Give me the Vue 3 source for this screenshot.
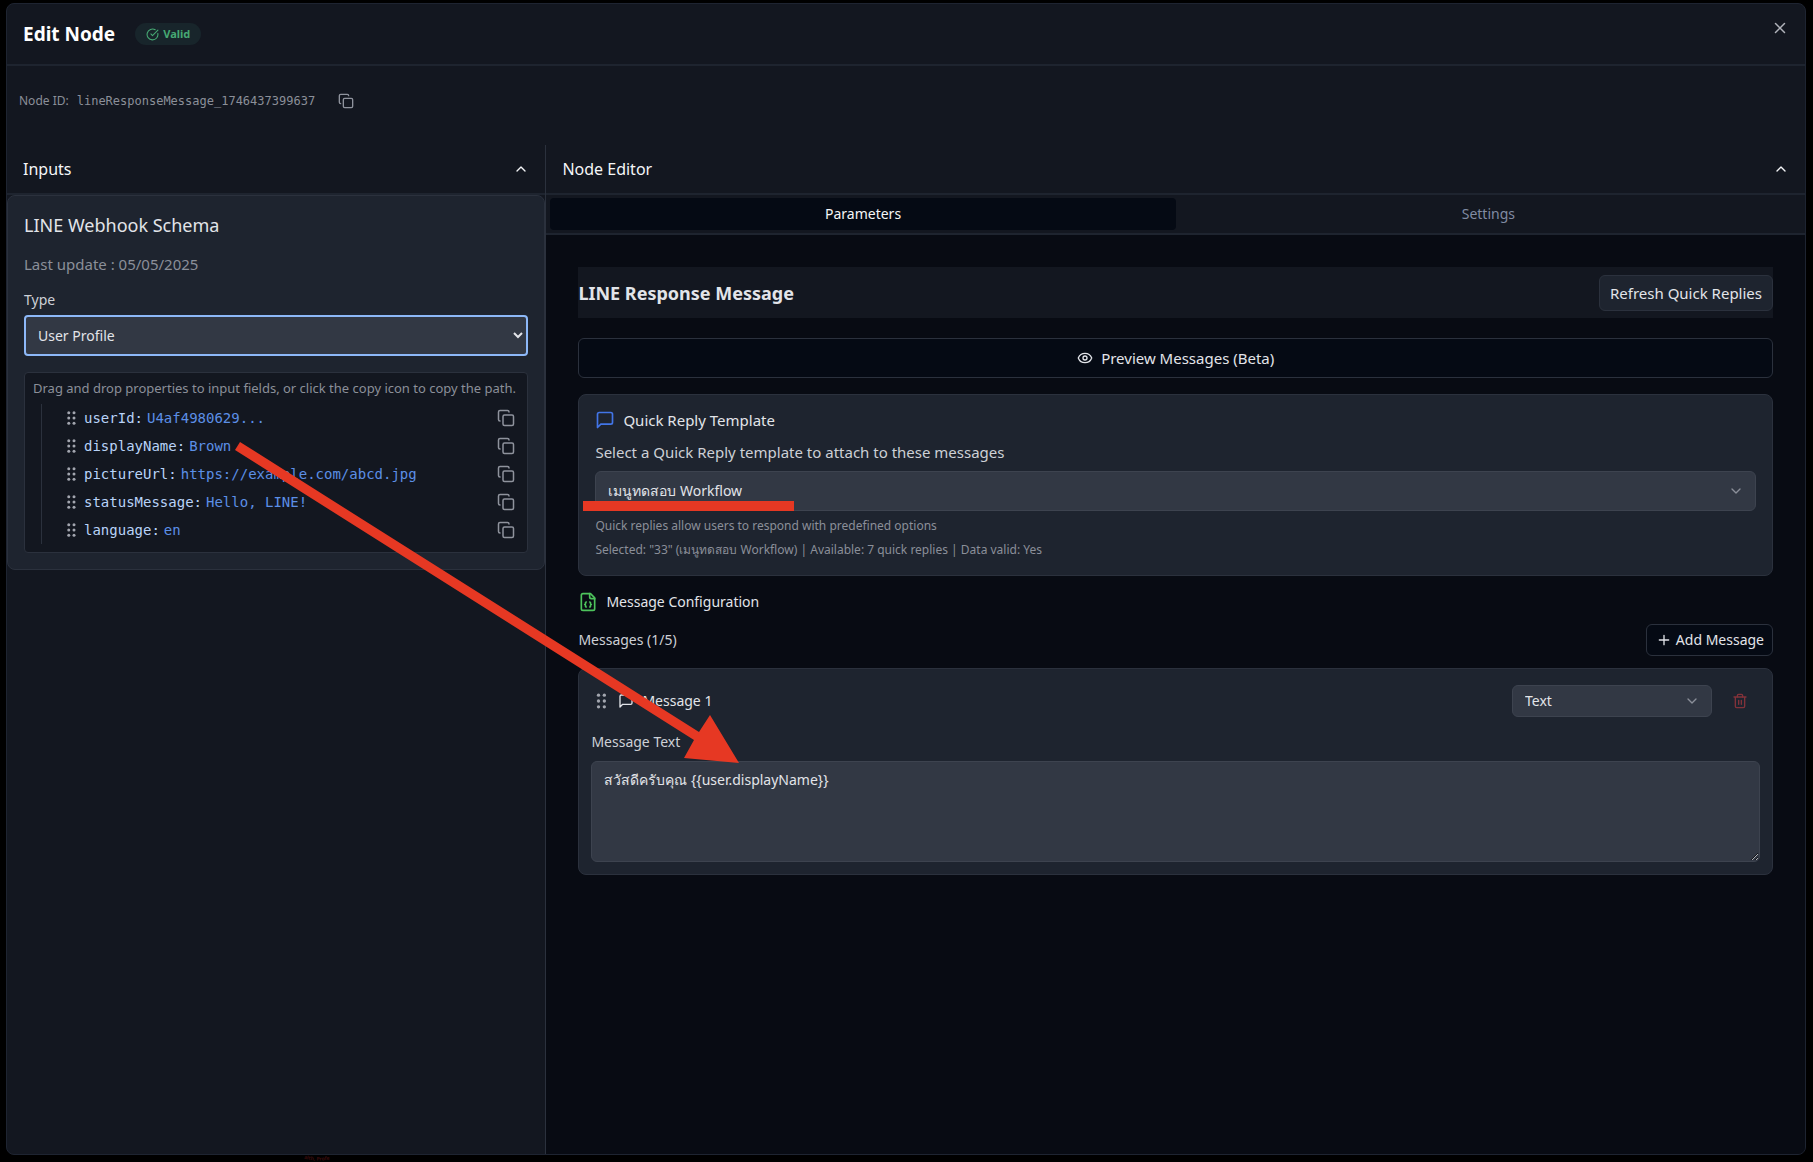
<script setup>
import { ref } from "vue";

const schemaType = ref("User Profile");
const quickReply = ref("33");
const messageType = ref("Text");
const messageText = ref("สวัสดีครับคุณ {{user.displayName}}");
const activeTab = ref("Parameters");
const inputsOpen = ref(true);
const editorOpen = ref(true);

const nodeId = "lineResponseMessage_1746437399637";
const tabs = ["Parameters", "Settings"];

const properties = [
  { key: "userId", value: "U4af4980629..." },
  { key: "displayName", value: "Brown" },
  { key: "pictureUrl", value: "https://example.com/abcd.jpg" },
  { key: "statusMessage", value: "Hello, LINE!" },
  { key: "language", value: "en" },
];

const gripDots = [
  [9, 5],
  [9, 12],
  [9, 19],
  [16, 5],
  [16, 12],
  [16, 19],
];

const copyPath = (key) => {
  navigator.clipboard?.writeText(key);
};
</script>

<template>
  <div class="backdrop">
    <svg class="behind" viewBox="0 0 40 8" aria-hidden="true">
      <path id="arc" d="M2 4 Q20 9 38 4" fill="none" />
      <text><textPath href="#arc" startOffset="3">alth, Profe</textPath></text>
    </svg>

    <div class="dialog" role="dialog" aria-labelledby="dialog-title">
      <header class="dialog-header">
        <h1 id="dialog-title">Edit Node</h1>
        <span class="badge">
          <svg class="icon" viewBox="0 0 24 24">
            <path d="M21.8 10A10 10 0 1 1 17 3.335" />
            <path d="m9 11 3 3L22 4" />
          </svg>
          Valid
        </span>
        <button class="icon-button close" aria-label="Close">
          <svg class="icon i18" viewBox="0 0 24 24">
            <path d="M18 6 6 18M6 6l12 12" />
          </svg>
        </button>
      </header>

      <div class="node-id">
        <span>Node ID:</span>
        <code>{{ nodeId }}</code>
        <button class="icon-button" aria-label="Copy node ID" @click="copyPath(nodeId)">
          <svg class="icon i16" viewBox="0 0 24 24">
            <rect x="8" y="8" width="14" height="14" rx="2" />
            <path d="M4 16c-1.1 0-2-.9-2-2V4c0-1.1.9-2 2-2h10c1.1 0 2 .9 2 2" />
          </svg>
        </button>
      </div>

      <div class="columns">
        <section class="inputs">
          <button class="section-header" @click="inputsOpen = !inputsOpen">
            Inputs
            <svg class="icon i16" viewBox="0 0 24 24"><path d="m18 15-6-6-6 6" /></svg>
          </button>

          <div v-show="inputsOpen" class="card schema">
            <h2>LINE Webhook Schema</h2>
            <p class="updated">Last update : 05/05/2025</p>
            <label for="schema-type">Type</label>
            <select id="schema-type" v-model="schemaType" class="native-select">
              <option>User Profile</option>
              <option>Message Event</option>
            </select>

            <div class="tree">
              <p class="tree-hint">
                Drag and drop properties to input fields, or click the copy icon to copy the path.
              </p>
              <ul>
                <li v-for="item in properties" :key="item.key" draggable="true">
                  <svg class="grip" viewBox="0 0 24 24">
                    <circle v-for="(dot, i) in gripDots" :key="i" :cx="dot[0]" :cy="dot[1]" r="2" />
                  </svg>
                  <span class="key">{{ item.key }}:</span>
                  <span class="value">{{ item.value }}</span>
                  <button
                    class="icon-button"
                    :aria-label="'Copy ' + item.key"
                    @click="copyPath(item.key)"
                  >
                    <svg class="icon i18" viewBox="0 0 24 24">
                      <rect x="8" y="8" width="14" height="14" rx="2" />
                      <path d="M4 16c-1.1 0-2-.9-2-2V4c0-1.1.9-2 2-2h10c1.1 0 2 .9 2 2" />
                    </svg>
                  </button>
                </li>
              </ul>
            </div>
          </div>
        </section>

        <section class="editor">
          <button class="section-header" @click="editorOpen = !editorOpen">
            Node Editor
            <svg class="icon i16" viewBox="0 0 24 24"><path d="m18 15-6-6-6 6" /></svg>
          </button>

          <div class="tabs" role="tablist">
            <button
              v-for="tab in tabs"
              :key="tab"
              role="tab"
              :aria-selected="activeTab === tab"
              :class="{ active: activeTab === tab }"
              @click="activeTab = tab"
            >
              {{ tab }}
            </button>
          </div>

          <div v-show="editorOpen" class="editor-body">
            <div class="title-bar">
              <h2>LINE Response Message</h2>
              <button class="refresh">Refresh Quick Replies</button>
            </div>

            <button class="preview">
              <svg class="icon i16" viewBox="0 0 24 24">
                <path
                  d="M2.062 12.348a1 1 0 0 1 0-.696 10.75 10.75 0 0 1 19.876 0 1 1 0 0 1 0 .696 10.75 10.75 0 0 1-19.876 0"
                />
                <circle cx="12" cy="12" r="3" />
              </svg>
              Preview Messages (Beta)
            </button>

            <div class="card quick-reply">
              <h3>
                <svg class="icon i20 blue" viewBox="0 0 24 24">
                  <path d="M21 15a2 2 0 0 1-2 2H7l-4 4V5a2 2 0 0 1 2-2h14a2 2 0 0 1 2 2z" />
                </svg>
                Quick Reply Template
              </h3>
              <label for="quick-reply">Select a Quick Reply template to attach to these messages</label>
              <div class="select-wrap marked">
                <select id="quick-reply" v-model="quickReply">
                  <option value="33">เมนูทดสอบ Workflow</option>
                </select>
                <svg class="icon i16" viewBox="0 0 24 24"><path d="m6 9 6 6 6-6" /></svg>
              </div>
              <p class="help">Quick replies allow users to respond with predefined options</p>
              <p class="help">
                Selected: "33" (เมนูทดสอบ Workflow) | Available: 7 quick replies | Data valid: Yes
              </p>
            </div>

            <h3>
              <svg class="icon i20 green" viewBox="0 0 24 24">
                <path d="M15 2H6a2 2 0 0 0-2 2v16a2 2 0 0 0 2 2h12a2 2 0 0 0 2-2V7Z" />
                <path d="M14 2v4a2 2 0 0 0 2 2h4" />
                <path d="M10 12a1 1 0 0 0-1 1v1a1 1 0 0 1-1 1 1 1 0 0 1 1 1v1a1 1 0 0 0 1 1" />
                <path d="M14 18a1 1 0 0 0 1-1v-1a1 1 0 0 1 1-1 1 1 0 0 1-1-1v-1a1 1 0 0 0-1-1" />
              </svg>
              Message Configuration
            </h3>

            <div class="messages-bar">
              <span>Messages (1/5)</span>
              <button class="add">
                <svg class="icon i16" viewBox="0 0 24 24"><path d="M5 12h14M12 5v14" /></svg>
                Add Message
              </button>
            </div>

            <div class="card message">
              <div class="message-head">
                <svg class="grip large" viewBox="0 0 24 24">
                  <circle v-for="(dot, i) in gripDots" :key="i" :cx="dot[0]" :cy="dot[1]" r="2" />
                </svg>
                <svg class="icon i16" viewBox="0 0 24 24">
                  <path d="M21 15a2 2 0 0 1-2 2H7l-4 4V5a2 2 0 0 1 2-2h14a2 2 0 0 1 2 2z" />
                </svg>
                <span class="message-name">Message 1</span>
                <div class="select-wrap small">
                  <select v-model="messageType" aria-label="Message type">
                    <option>Text</option>
                    <option>Image</option>
                  </select>
                  <svg class="icon i16" viewBox="0 0 24 24"><path d="m6 9 6 6 6-6" /></svg>
                </div>
                <button class="icon-button trash" aria-label="Delete message">
                  <svg class="icon i16" viewBox="0 0 24 24">
                    <path d="M3 6h18M19 6v14c0 1-1 2-2 2H7c-1 0-2-1-2-2V6" />
                    <path d="M8 6V4c0-1 1-2 2-2h4c1 0 2 1 2 2v2M10 11v6M14 11v6" />
                  </svg>
                </button>
              </div>
              <label for="message-text">Message Text</label>
              <textarea id="message-text" v-model="messageText"></textarea>
            </div>
          </div>
        </section>
      </div>
    </div>

    <!-- arrow linking displayName to the message text -->
    <svg class="arrow" viewBox="0 0 504 321" aria-hidden="true">
      <polygon points="5,0 464,290 475,273 504,321 449,316 459,298 0,8" />
    </svg>
  </div>
</template>

<style>
body {
  background-color: #000;
}
</style>

<style scoped>
* {
  box-sizing: border-box;
}
h1,
h2,
h3,
p,
ul {
  margin: 0;
  padding: 0;
}
button,
select,
textarea {
  font: inherit;
  color: inherit;
}
button {
  cursor: pointer;
}
.backdrop {
  position: relative;
  display: flex;
  min-height: 100vh;
  padding: 3px 7px 7px 6px;
  font-family: "Noto Sans", "Open Sans", sans-serif;
  font-size: 14px;
  line-height: 20px;
  color: #e2e4e9;
}
.behind {
  position: absolute;
  left: 299px;
  bottom: 0;
  width: 40px;
  height: 8px;
  font-size: 5px;
  font-weight: bold;
  fill: #3a0c0c;
}
.dialog {
  position: relative;
  display: flex;
  flex-direction: column;
  flex: 1;
  min-width: 0;
  border: 1px solid #1e2431;
  border-radius: 8px;
  background-color: #131720;
  overflow: hidden;
}
.dialog-header {
  display: flex;
  align-items: center;
  gap: 20px;
  height: 62px;
  padding: 0 16px;
  border-bottom: 2px solid #1e242f;
}
h1 {
  font-size: 19px;
  line-height: 28px;
  color: #fff;
}
.badge {
  display: flex;
  align-items: center;
  gap: 4px;
  padding: 1px 11px;
  border-radius: 12px;
  background-color: #18252b;
  color: #46a873;
  font-size: 11px;
  font-weight: bold;
}
.badge .icon {
  width: 13px;
  height: 13px;
}
.icon {
  flex: none;
  fill: none;
  stroke: currentColor;
  stroke-width: 2;
  stroke-linecap: round;
  stroke-linejoin: round;
}
.i16 {
  width: 16px;
  height: 16px;
}
.i18 {
  width: 18px;
  height: 18px;
}
.i20 {
  width: 20px;
  height: 20px;
}
.blue {
  color: #4275e8;
}
.green {
  color: #4dc35c;
}
.icon-button {
  display: flex;
  padding: 0;
  border: none;
  background: none;
  color: #8f939d;
}
.close {
  align-self: flex-start;
  margin: 15px 0 0 auto;
  color: #b0b3ba;
}
.node-id {
  display: flex;
  align-items: center;
  gap: 8px;
  height: 79px;
  padding: 0 12px 9px;
  font-size: 12px;
  color: #8b8f99;
}
.node-id code,
.tree li {
  font-family: "DejaVu Sans Mono", monospace;
}
.node-id .icon-button {
  margin-left: 15px;
}
.columns {
  display: grid;
  grid-template-columns: 3fr 7fr;
  flex: 1;
}
.inputs {
  min-width: 0;
  border-right: 1px solid #2b313d;
}
.editor {
  display: flex;
  flex-direction: column;
  min-width: 0;
  background-color: #080b13;
}
.section-header {
  display: flex;
  justify-content: space-between;
  align-items: center;
  width: 100%;
  height: 50px;
  padding: 0 16px;
  border: none;
  border-bottom: 2px solid #1e242f;
  background-color: #131720;
  color: #f5f6f8;
  font-size: 16px;
}
.card {
  border: 1px solid #2b313d;
  border-radius: 8px;
  background-color: #1e242f;
}
.schema {
  padding: 16px;
}
.schema h2 {
  font-size: 18px;
  font-weight: normal;
  line-height: 26px;
}
.updated {
  margin: 16px 0;
  font-size: 15px;
  color: #8b8f99;
}
label {
  display: block;
  color: #cdd0d6;
}
.native-select {
  display: block;
  width: 100%;
  height: 41px;
  margin: 5px 0 16px;
  padding: 0 8px;
  border: 2px solid #8db8f8;
  border-radius: 4px;
  outline: none;
  background-color: #323844;
}
.tree {
  padding: 5px 8px 8px;
  border: 1px solid #2b313d;
  border-radius: 4px;
  background-color: #131720;
}
.tree-hint {
  margin-bottom: 6px;
  font-size: 13px;
  color: #8b8f99;
}
.tree ul {
  margin-left: 8px;
  padding-left: 20px;
  border-left: 1px solid #2b313d;
  list-style: none;
}
.tree li {
  display: flex;
  align-items: center;
  height: 28px;
}
.grip {
  flex: none;
  width: 18px;
  height: 18px;
  margin-right: 4px;
  fill: #a3a6af;
}
.key {
  margin-right: 4px;
  color: #b9d3f8;
}
.value {
  color: #5c8fe6;
}
.tree .icon-button {
  margin: 0 4px 0 auto;
}
.tabs {
  display: grid;
  grid-template-columns: 1fr 1fr;
  padding: 3px 4px;
  border-bottom: 2px solid #1e242f;
  background-color: #131720;
}
.tabs button {
  height: 32px;
  padding: 0;
  border: none;
  border-radius: 4px;
  background: none;
  color: #808ba3;
}
.tabs .active {
  background-color: #050a14;
  color: #f5f6f8;
}
.editor-body {
  padding: 32px;
}
.title-bar {
  display: flex;
  justify-content: space-between;
  align-items: center;
  height: 51px;
  margin-bottom: 20px;
  background-color: #131720;
}
.title-bar h2 {
  font-size: 18px;
  line-height: 28px;
}
.refresh,
.preview,
.add {
  border: 1px solid #2b313d;
  border-radius: 6px;
}
.refresh {
  height: 36px;
  padding: 0 10px;
  background-color: #1e242f;
  font-size: 15px;
}
.preview,
.add {
  display: flex;
  justify-content: center;
  align-items: center;
  gap: 8px;
  background-color: #050a14;
}
.preview {
  width: 100%;
  height: 40px;
  font-size: 15px;
}
.quick-reply {
  margin: 16px 0;
  padding: 15px 16px;
}
h3 {
  display: flex;
  align-items: center;
  gap: 8px;
  font-size: 14px;
  font-weight: normal;
}
.quick-reply h3 {
  margin-bottom: 12px;
  font-size: 15px;
}
.quick-reply label {
  font-size: 15px;
}
.select-wrap {
  position: relative;
  display: flex;
  align-items: center;
}
.select-wrap select {
  width: 100%;
  height: 40px;
  padding: 0 12px;
  border: 1px solid #3d434f;
  border-radius: 6px;
  background-color: #323844;
  appearance: none;
}
.select-wrap .icon {
  position: absolute;
  right: 12px;
  color: #8b8f99;
  pointer-events: none;
}
.quick-reply .select-wrap {
  margin: 9px 0 5px;
}
/* red underline over the chosen template */
.marked::after {
  content: "";
  position: absolute;
  left: -12px;
  bottom: 0;
  width: 211px;
  height: 10px;
  background-color: #e63823;
}
.help {
  font-size: 12px;
  color: #8b8f99;
}
.help + .help {
  margin-top: 4px;
}
.messages-bar {
  display: flex;
  justify-content: space-between;
  align-items: center;
  margin: 12px 0;
  color: #cdd0d6;
}
.add {
  gap: 4px;
  height: 32px;
  padding: 0 8px 0 9px;
  color: #e2e4e9;
}
.message {
  padding: 16px 12px 12px;
}
.message-head {
  display: flex;
  align-items: center;
  margin-bottom: 15px;
}
.grip.large {
  width: 20px;
  height: 20px;
  margin-right: 7px;
}
.message-name {
  margin-left: 8px;
}
.select-wrap.small {
  width: 200px;
  margin-left: auto;
}
.small select {
  height: 32px;
}
.trash {
  margin: 0 12px 0 20px;
  color: #82323a;
}
textarea {
  display: block;
  width: 100%;
  height: 101px;
  margin-top: 9px;
  padding: 8px 12px;
  border: 1px solid #3d434f;
  border-radius: 6px;
  outline: none;
  background-color: #323844;
  resize: vertical;
}
.arrow {
  position: absolute;
  left: 235px;
  top: 442px;
  width: 504px;
  height: 321px;
  fill: #e63823;
  pointer-events: none;
}
</style>
